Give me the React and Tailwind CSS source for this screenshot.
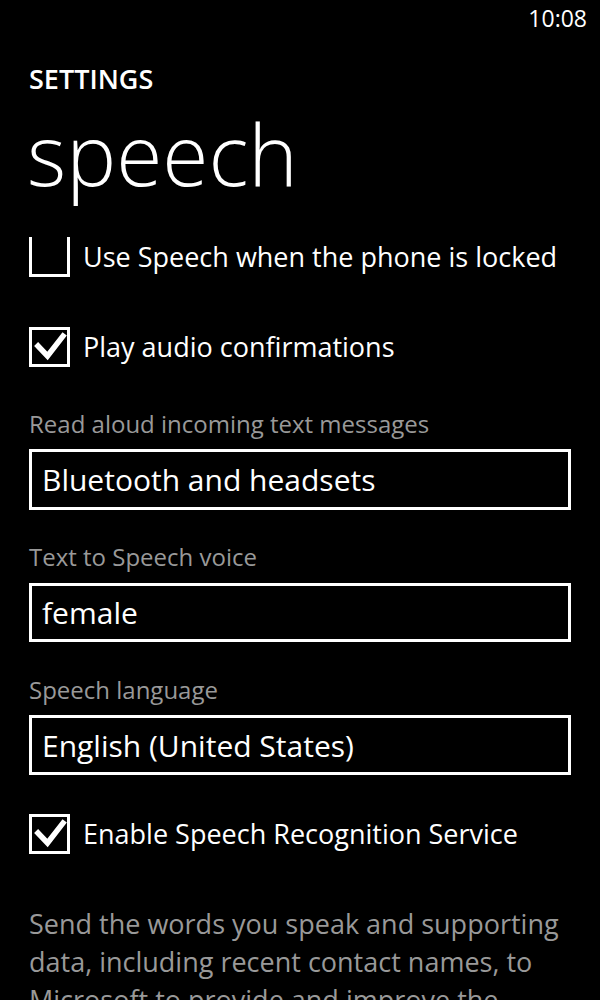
import React from "react";

function Check() {
  return (
    <svg width="34" height="34" viewBox="0 0 34 34" className="block">
      <path d="M5 16 L14.5 26 L30 6" fill="none" stroke="white" strokeWidth="5.5" strokeLinecap="square" strokeLinejoin="miter" />
    </svg>
  );
}

function CheckRow({ checked, noTop, label, className }) {
  return (
    <div className={`flex items-center h-[40px] ${className}`}>
      <div
        className={`w-[41px] h-[40px] border-[3px] border-white flex items-center justify-center shrink-0 ${noTop ? "border-t-0" : ""}`}
      >
        {checked ? <Check /> : null}
      </div>
      <div className="ml-[13px] text-[27px] leading-[40px] text-white whitespace-nowrap">{label}</div>
    </div>
  );
}

function Label({ children, className }) {
  return <div className={`h-[30px] text-[24px] leading-[30px] text-[#999999] whitespace-nowrap ${className}`}>{children}</div>;
}

function Box({ children, className }) {
  return (
    <div className={`border-[3px] border-white flex items-center pl-[10px] text-[30px] text-white whitespace-nowrap ${className}`}>
      {children}
    </div>
  );
}

export default function App() {
  return (
    <div
      className="w-[600px] h-[1000px] bg-black overflow-hidden text-white"
      style={{ fontFamily: '"Open Sans", "Noto Sans", sans-serif' }}
    >
      <div className="h-[36px] flex items-center justify-end pr-[13px] text-[23px] leading-none">10:08</div>
      <div className="px-[29px] flex flex-col">
        <div className="mt-[23px] h-[40px] text-[27px] leading-[40px] font-semibold">SETTINGS</div>
        <div className="mt-[5px] h-[100px] text-[84px] leading-[100px] font-light -ml-[2px]">speech</div>
        <CheckRow className="mt-[33px]" noTop label="Use Speech when the phone is locked" />
        <CheckRow className="mt-[50px]" checked label="Play audio confirmations" />
        <Label className="mt-[42px]">Read aloud incoming text messages</Label>
        <Box className="mt-[10px] h-[61px]">Bluetooth and headsets</Box>
        <Label className="mt-[32px]">Text to Speech voice</Label>
        <Box className="mt-[11px] h-[59px]">female</Box>
        <Label className="mt-[33px]">Speech language</Label>
        <Box className="mt-[10px] h-[60px]">English (United States)</Box>
        <CheckRow className="mt-[39px]" checked label="Enable Speech Recognition Service" />
        <p className="mt-[51px] text-[27px] leading-[38px] text-[#999999]">
          Send the words you speak and supporting data, including recent contact names, to Microsoft to provide and improve the
        </p>
      </div>
    </div>
  );
}
